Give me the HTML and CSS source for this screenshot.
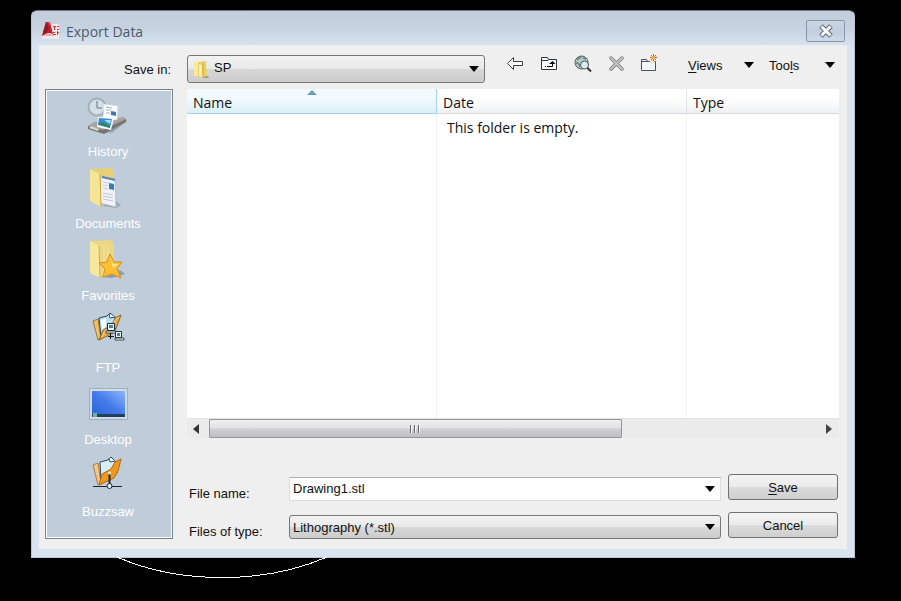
FILE: index.html
```html
<!DOCTYPE html>
<html lang="en">
  <head>
    <meta charset="UTF-8" />
    <meta name="viewport" content="width=device-width, initial-scale=1.0" />
    <title>Export Data</title>
    <link rel="stylesheet" href="styles.css">
  </head>
  <body>
    <svg class="drawing" width="210" height="22" viewBox="0 0 210 22" fill="none" stroke="#fff" shape-rendering="crispEdges">
      <path d="M0 0C32 14 70 20.500 105 20.500S178 14 210 0" />
    </svg>

    <div class="dialog">
      <div class="title-bar">
        <svg width="20" height="20" viewBox="0 0 20 20">
          <path d="M1 12l9-9h8v15H1z" fill="#f3eaec" />
          <path d="M5 1h4l3 12-4-1-4 1-3 2z" fill="#c3202c" />
          <path d="M5 1L1 15l4-3 3-5z" fill="#94161f" />
          <path d="M7 1h2l1 5z" fill="#e4606a" />
          <path d="M1 15l4-2h4l4 1v1H1z" fill="#e9a9ac" />
          <path d="M12 5.500h3M13.500 6v3M16 5.500h2M16 8.500h2M12 11.500h2M12 13.500h3M16.500 10v4M17 11.500h1" stroke="#d0353f" fill="none" />
        </svg>
        <h1>Export Data</h1>
        <button class="close" aria-label="Close">
          <svg width="16" height="14" viewBox="0 0 16 14">
            <path d="M3 2l10 10M13 2L3 12" stroke="#5c6878" stroke-width="5" />
            <path d="M3.500 2.500l9 9M12.500 2.500l-9 9" stroke="#fff" stroke-width="3" />
          </svg>
        </button>
      </div>

      <div class="client">
        <label class="save-label" for="folder">Save in:</label>
        <div class="toolbar">
          <div class="combo folder-combo">
            <svg class="folder-icon" width="18" height="20" viewBox="0 0 18 20">
              <path d="M10 17l6 0 1 2h-6z" fill="#9a9a98" />
              <path d="M2 2l4 1 0 15-4-2z" fill="#f8ea9c" />
              <path d="M6 3l8-1 1 15-9 2z" fill="#e9d068" />
              <path d="M7 5l3 1 0 12-3-1z" fill="#f9efae" />
              <path d="M11 4v13" stroke="#c9a93f" />
            </svg>
            <select id="folder">
              <option>SP</option>
            </select>
            <svg class="arrow" width="10" height="6" viewBox="0 0 10 6"><path d="M0 0h10L5 6z" /></svg>
          </div>
          <div class="tools">
            <button aria-label="Back">
              <svg width="24" height="24" viewBox="0 0 24 24">
                <path d="M4.500 11.500l6-6v4h9v4h-9v4z" fill="#fafafa" stroke="#3f3f4c" />
              </svg>
            </button>
            <button aria-label="Up one level">
              <svg width="24" height="24" viewBox="0 0 24 24">
                <path d="M4.500 17.500v-12h6l1 2h8v10z" fill="#fafafa" stroke="#32343f" />
                <path d="M5 8.500h6l1-1" fill="none" stroke="#32343f" />
                <path d="M8 14.500h1M10 14.500h5.500V11" fill="none" stroke="#000" />
                <path d="M12 12l3.500-3 3 3z" />
              </svg>
            </button>
            <button aria-label="Search the web">
              <svg width="24" height="24" viewBox="0 0 24 24">
                <circle cx="10.500" cy="10.500" r="6.500" fill="#b5cbc6" stroke="#53636a" />
                <path d="M6 8c2-3 4-2 5-4M5 12c2-3 3 0 4 3M12 6l3 1" fill="none" stroke="#6c8380" stroke-width="1.500" />
                <circle cx="13.500" cy="13" r="4" fill="#dcebed" stroke="#4b555e" />
                <path d="M16.500 16l3.500 3.500" stroke="#2a2f38" stroke-width="2" />
              </svg>
            </button>
            <button aria-label="Delete">
              <svg width="24" height="24" viewBox="0 0 24 24">
                <path d="M6 6l11 11M17 6L6 17" stroke="#777" stroke-width="3.500" stroke-linecap="round" />
                <path d="M6 6l11 11M17 6L6 17" stroke="#c4c4c4" stroke-width="2" stroke-linecap="round" />
              </svg>
            </button>
            <button aria-label="Create new folder">
              <svg width="24" height="24" viewBox="0 0 24 24">
                <path d="M2.500 18.500v-11h5l1 2h8v9z" fill="#f3f6fb" stroke="#4b5060" />
                <path d="M3 9.500h7" stroke="#4b5060" />
                <circle cx="13" cy="9" r="2.500" fill="#f9dfc5" />
                <path d="M14.500 2v7M11 5.500h7M12 3l5 5M17 3l-5 5" stroke="#c8641c" />
                <circle cx="14.500" cy="5.500" r="1.500" fill="#ffc24a" />
              </svg>
            </button>
          </div>
          <div class="menus">
            <button><span><u>V</u>iews</span><svg width="10" height="6" viewBox="0 0 10 6"><path d="M0 0h10L5 6z" /></svg></button>
            <button><span>Too<u>l</u>s</span><svg width="10" height="6" viewBox="0 0 10 6"><path d="M0 0h10L5 6z" /></svg></button>
          </div>
        </div>

        <nav class="places">
          <a href="#">
            <svg width="48" height="48" viewBox="0 0 48 48">
              <path d="M20 40l8 1 15-12-2-3z" fill="#9aa4ae" />
              <circle cx="13" cy="15" r="8.500" fill="#d5e0e6" stroke="#a3b0b9" stroke-width="2" />
              <path d="M13 9v7h5" fill="none" stroke="#657580" />
              <path d="M4 34l6-4 30-5 2 3-23 12-15-4z" fill="#a5a39f" />
              <path d="M4 34l15 4 23-11v3L20 42 4 37z" fill="#77736f" />
              <path d="M20 12l14 2-1 14-14-1z" fill="#fafcff" stroke="#c8d2da" stroke-width=".5" />
              <path d="M22 15l6 1M22 18h5M22 21h4" stroke="#9fb2c5" />
              <path d="M27 19l5 1v4l-5-1z" fill="#3d79b4" />
              <path d="M14 25l16 1-3 12-14-3z" fill="#f7fbff" />
              <path d="M15 26l13 1-2 9-12-3z" fill="#3b8ad2" />
              <path d="M14 32l4-2 8 4v2z" fill="#2b8b58" />
              <path d="M20 28l7 0-1 4z" fill="#9cdcf8" />
              <path d="M7 34l8 3-1 2-9-3z" fill="#d8d6d2" />
            </svg>
            <span>History</span>
          </a>
          <a href="#">
            <svg width="48" height="48" viewBox="0 0 48 48">
              <path d="M18 42l14 2 5-3-5-4z" fill="#9da9b5" />
              <path d="M6 5l22-1 2 4v30l-14 3z" fill="#e7cf77" />
              <path d="M17 12l14 3 1 28-16-4z" fill="#f1f1f8" stroke="#b0b5c0" stroke-width=".7" />
              <path d="M18 12l13 3v2l-13-3z" fill="#4b84b8" />
              <path d="M19 18l6 1M19 21l5 1M19 24l5 1M19 29l10 2M19 32l10 2M19 35l10 2" stroke="#c5cad8" />
              <path d="M25 19l5 1v6l-5-1z" fill="#347fae" />
              <path d="M6 5l10 5 1 33-11-6z" fill="#f7e596" />
              <path d="M16 10l1 33" stroke="#cda944" />
            </svg>
            <span>Documents</span>
          </a>
          <a href="#">
            <svg width="48" height="48" viewBox="0 0 48 48">
              <path d="M16 41l12 1 13-4-5-4z" fill="#8d9db2" />
              <path d="M6 5l21-1 3 4v30l-14 3z" fill="#ecd681" />
              <path d="M20 9v25M24 10v22" stroke="#f5e6a3" />
              <path d="M6 5l9 5 1 32-10-5z" fill="#f8e89d" />
              <path d="M15 10l1 32" stroke="#cfae50" />
              <path d="M26 18l4 8 8 0-5 7 4 9-9-4-9 3 2-8-6-6 8-1z" fill="#fdbf32" stroke="#d98d1e" />
              <path d="M26 20l3 8 6 0-6 4z" fill="#ffe28a" />
            </svg>
            <span>Favorites</span>
          </a>
          <a href="#">
            <svg width="48" height="48" viewBox="0 0 48 48">
              <path d="M9 13l5-2 3 20-3 1z" fill="#f0c063" stroke="#8f6423" stroke-width=".8" />
              <path d="M15 10l8-2 3-3 5 4 1 12-15 8z" fill="#bce1ee" stroke="#32475b" />
              <path d="M17 12l5-2v8l-4 4z" fill="#f2fbff" />
              <path d="M25 6l1 4 5-1" fill="#fff" stroke="#32475b" />
              <path d="M37 7l-6 3-3 7-9 5-4 10 14-7 4-7z" fill="#e3a848" stroke="#8f6423" />
              <path d="M35 9l-4 3-2 6-8 5-3 6" fill="none" stroke="#f7d58b" />
              <path d="M22 23h10v2H22zM31 30h9v2h-9z" fill="#edf5f7" stroke="#222c35" stroke-width=".8" />
              <path d="M23.500 15.500h7v7h-7zM31.500 23.500h6v6h-6z" fill="#edf5f7" stroke="#222c35" />
              <path d="M25 17h4v3h-4zM33 25h3v3h-3z" fill="#557f95" />
              <path d="M26.500 25v6M24 28.500h6" stroke="#101820" />
            </svg>
            <span>FTP</span>
          </a>
          <a href="#">
            <svg width="48" height="48" viewBox="0 0 48 48">
              <defs>
                <linearGradient id="screen" x1="0" y1="1" x2="1" y2="0">
                  <stop offset="0" stop-color="#2464d8" />
                  <stop offset=".5" stop-color="#447bea" />
                  <stop offset="1" stop-color="#8bb8fa" />
                </linearGradient>
              </defs>
              <rect x="5" y="8" width="39" height="32" fill="#a1aebd" />
              <rect x="6" y="9" width="37" height="30" fill="#d2dbe5" />
              <rect x="8" y="11" width="33" height="25" fill="url(#screen)" />
              <rect x="8" y="34" width="33" height="3" fill="#23405f" />
              <rect x="9" y="33" width="4" height="4" fill="#6eb39b" />
            </svg>
            <span>Desktop</span>
          </a>
          <a href="#">
            <svg width="48" height="48" viewBox="0 0 48 48">
              <path d="M9 13l5-2 3 20-3 2z" fill="#f4c588" stroke="#a96a22" stroke-width=".8" />
              <path d="M16 10l8-2 3-3 4 4 2 12-16 8z" fill="#d9eff2" stroke="#32475b" />
              <path d="M25 6l1 4 5-1" fill="#fff" stroke="#32475b" />
              <path d="M37 7l-6 3-4 7-9 5-3 11 15-7 4-7z" fill="#f0991f" stroke="#b0670f" />
              <path d="M9 34.500h29" stroke="#1d252b" />
              <path d="M25.500 22v10" stroke="#1d252b" stroke-width="2" />
              <circle cx="25.500" cy="21" r="1.500" fill="#dde6e9" />
              <circle cx="25.500" cy="34" r="2.500" fill="#e9f2f3" stroke="#1d252b" />
            </svg>
            <span>Buzzsaw</span>
          </a>
        </nav>

        <div class="main">
          <table class="files">
            <thead>
              <tr>
                <th class="sorted">Name<svg width="10" height="5" viewBox="0 0 10 5"><path d="M0 5l5-5 5 5z" fill="#6f9bb5" /></svg></th>
                <th>Date</th>
                <th class="type">Type</th>
              </tr>
            </thead>
            <tbody>
              <tr>
                <td></td>
                <td>This folder is empty.</td>
                <td></td>
              </tr>
            </tbody>
          </table>
          <div class="scrollbar">
            <svg width="6" height="10" viewBox="0 0 6 10"><path d="M6 0v10L0 5z" fill="#333" /></svg>
            <div class="track">
              <div class="thumb"><i></i><i></i><i></i></div>
            </div>
            <svg width="6" height="10" viewBox="0 0 6 10"><path d="M0 0v10l6-5z" fill="#444" /></svg>
          </div>

          <form class="file-form">
            <label for="filename">File name:</label>
            <div class="combo">
              <input id="filename" type="text" value="Drawing1.stl" />
              <svg class="arrow" width="10" height="6" viewBox="0 0 10 6"><path d="M0 0h10L5 6z" /></svg>
            </div>
            <button type="button"><u>S</u>ave</button>
            <label for="filetype">Files of type:</label>
            <div class="combo">
              <select id="filetype">
                <option>Lithography (*.stl)</option>
              </select>
              <svg class="arrow" width="10" height="6" viewBox="0 0 10 6"><path d="M0 0h10L5 6z" /></svg>
            </div>
            <button type="button">Cancel</button>
          </form>
        </div>
      </div>
    </div>
  </body>
</html>
```
FILE: styles.css
```css
* {
  margin: 0;
  padding: 0;
  box-sizing: border-box;
}
body {
  min-height: 100vh;
  padding: 10px 46px 43px 31px;
  background-color: #000;
  color: #111;
  font-family: "Liberation Sans", Arial, sans-serif;
  font-size: 13px;
  display: flex;
}
svg {
  display: block;
  flex-shrink: 0;
}
button {
  font: inherit;
  color: inherit;
  background: none;
  border: none;
}
u {
  text-underline-offset: 2px;
}
.drawing {
  position: absolute;
  left: 117px;
  bottom: 22px;
}
.dialog {
  flex: 1;
  min-width: 0;
  display: flex;
  flex-direction: column;
  padding: 0 7px 8px;
  border: 1px solid #b9c4d0;
  border-top-color: #6f7882;
  border-radius: 6px 6px 0 0;
  background: linear-gradient(#c1cddb, #c6d2e0 16px, #d9e4f0 36px, #d9e4f0);
}
.title-bar {
  height: 34px;
  display: flex;
  align-items: center;
  gap: 5px;
  padding: 6px 2px 0 2px;
}
.title-bar h1 {
  flex: 1;
  padding-top: 1px;
  font-family: "Open Sans", "Noto Sans", sans-serif;
  font-size: 14px;
  font-weight: normal;
  line-height: 20px;
  color: #4b5b6c;
}
.close {
  width: 39px;
  height: 22px;
  display: flex;
  align-items: center;
  justify-content: center;
  border: 1px solid #8997aa;
  border-radius: 2px;
  background: linear-gradient(#cbd6e3, #c1cedd 50%, #cfdbe8);
}
.client {
  flex: 1;
  display: grid;
  grid-template-columns: 128px minmax(0, 1fr);
  grid-template-rows: 44px 1fr;
  column-gap: 14px;
  padding: 0 8px 10px 6px;
  background-color: #efefef;
}
.save-label {
  justify-self: end;
  align-self: center;
  padding: 4px 2px 0 0;
}
.toolbar {
  display: flex;
  align-items: center;
}
.combo {
  position: relative;
}
.combo select,
.combo input {
  width: 100%;
  height: 24px;
  display: block;
  font: inherit;
  color: inherit;
  border-radius: 3px;
}
.combo select {
  appearance: none;
  padding: 0 20px 0 3px;
  border: 1px solid #777;
  background: linear-gradient(#f2f2f2, #e9e9e9 50%, #d8d8d8 50%, #cdcdcd);
}
.combo input {
  padding: 0 20px 2px 3px;
  border: 1px solid #dcdcdc;
  border-top-color: #ababb0;
  border-radius: 0;
  background-color: #fff;
}
.arrow {
  position: absolute;
  right: 6px;
  top: 9px;
  pointer-events: none;
}
.folder-combo {
  width: 298px;
  margin-top: 4px;
}
.folder-combo select {
  height: 28px;
  padding: 0 20px 3px 26px;
}
.folder-combo .arrow {
  top: 11px;
}
.folder-icon {
  position: absolute;
  left: 5px;
  top: 4px;
  pointer-events: none;
}
.tools {
  display: flex;
  margin: 0 0 6px 13px;
}
.tools button {
  width: 34px;
  display: flex;
  justify-content: center;
}
.menus {
  display: flex;
  gap: 15px;
  margin: 0 4px 4px auto;
}
.menus button {
  width: 66px;
  display: flex;
  align-items: center;
  justify-content: space-between;
}
.places {
  border: 1px solid #75808d;
  box-shadow: inset 0 0 0 1px #fff;
  padding-top: 2px;
  background-color: #bfccd9;
}
.places a {
  height: 72px;
  display: flex;
  flex-direction: column;
  align-items: center;
  padding-right: 2px;
  color: #fff;
  line-height: 24px;
  text-decoration: none;
}
.main {
  display: flex;
  flex-direction: column;
}
.files {
  flex: 1;
  display: flex;
  flex-direction: column;
  background-color: #fff;
  font-family: "Open Sans", "Noto Sans", sans-serif;
  font-size: 14px;
}
.files thead,
.files tbody {
  display: flex;
}
.files tbody {
  flex: 1;
}
.files tr {
  flex: 1;
  display: grid;
  grid-template-columns: 250px 250px minmax(0, 1fr);
}
.files th {
  position: relative;
  height: 25px;
  padding: 2px 6px 0;
  font-weight: normal;
  line-height: 24px;
  text-align: left;
  border-right: 1px solid #dfe2e6;
  border-bottom: 1px solid #d5d8dc;
  background: linear-gradient(#fff 40%, #f0f1f3);
}
.files .sorted {
  border-color: #a8d4e8;
  background: linear-gradient(#f2fafd 40%, #d9eff9);
}
.files th svg {
  position: absolute;
  left: 50%;
  top: 1px;
  margin-left: -5px;
}
.files td {
  padding: 4px 10px;
  line-height: 20px;
  border-right: 1px solid #f0f1f3;
}
.files th:last-child,
.files td:last-child {
  border-right: none;
}
.scrollbar {
  height: 20px;
  display: flex;
  align-items: center;
  gap: 10px;
  padding: 0 7px 0 6px;
  border-top: 1px solid #e2e2e2;
  background-color: #ebebeb;
}
.track {
  flex: 1;
}
.thumb {
  width: 68%;
  height: 19px;
  display: flex;
  align-items: center;
  justify-content: center;
  gap: 2px;
  border: 1px solid #96969a;
  border-radius: 1px;
  background: linear-gradient(#f0f0f0, #e2e2e4 45%, #cfcfd3 55%, #bfbfc4);
}
.thumb i {
  width: 2px;
  height: 8px;
  border-left: 1px solid #666;
  border-right: 1px solid #f4f4f4;
}
.file-form {
  display: grid;
  grid-template-columns: 93px minmax(0, 1fr) 110px;
  grid-auto-rows: 26px;
  align-items: end;
  gap: 12px 7px;
  padding: 37px 1px 0 2px;
}
.file-form label {
  line-height: 14px;
}
.file-form button {
  height: 26px;
  margin-bottom: 1px;
  border: 1px solid #707070;
  border-radius: 3px;
  background: linear-gradient(#f3f3f3, #ebebeb 50%, #dcdcdc 50%, #cfcfcf);
}
```
